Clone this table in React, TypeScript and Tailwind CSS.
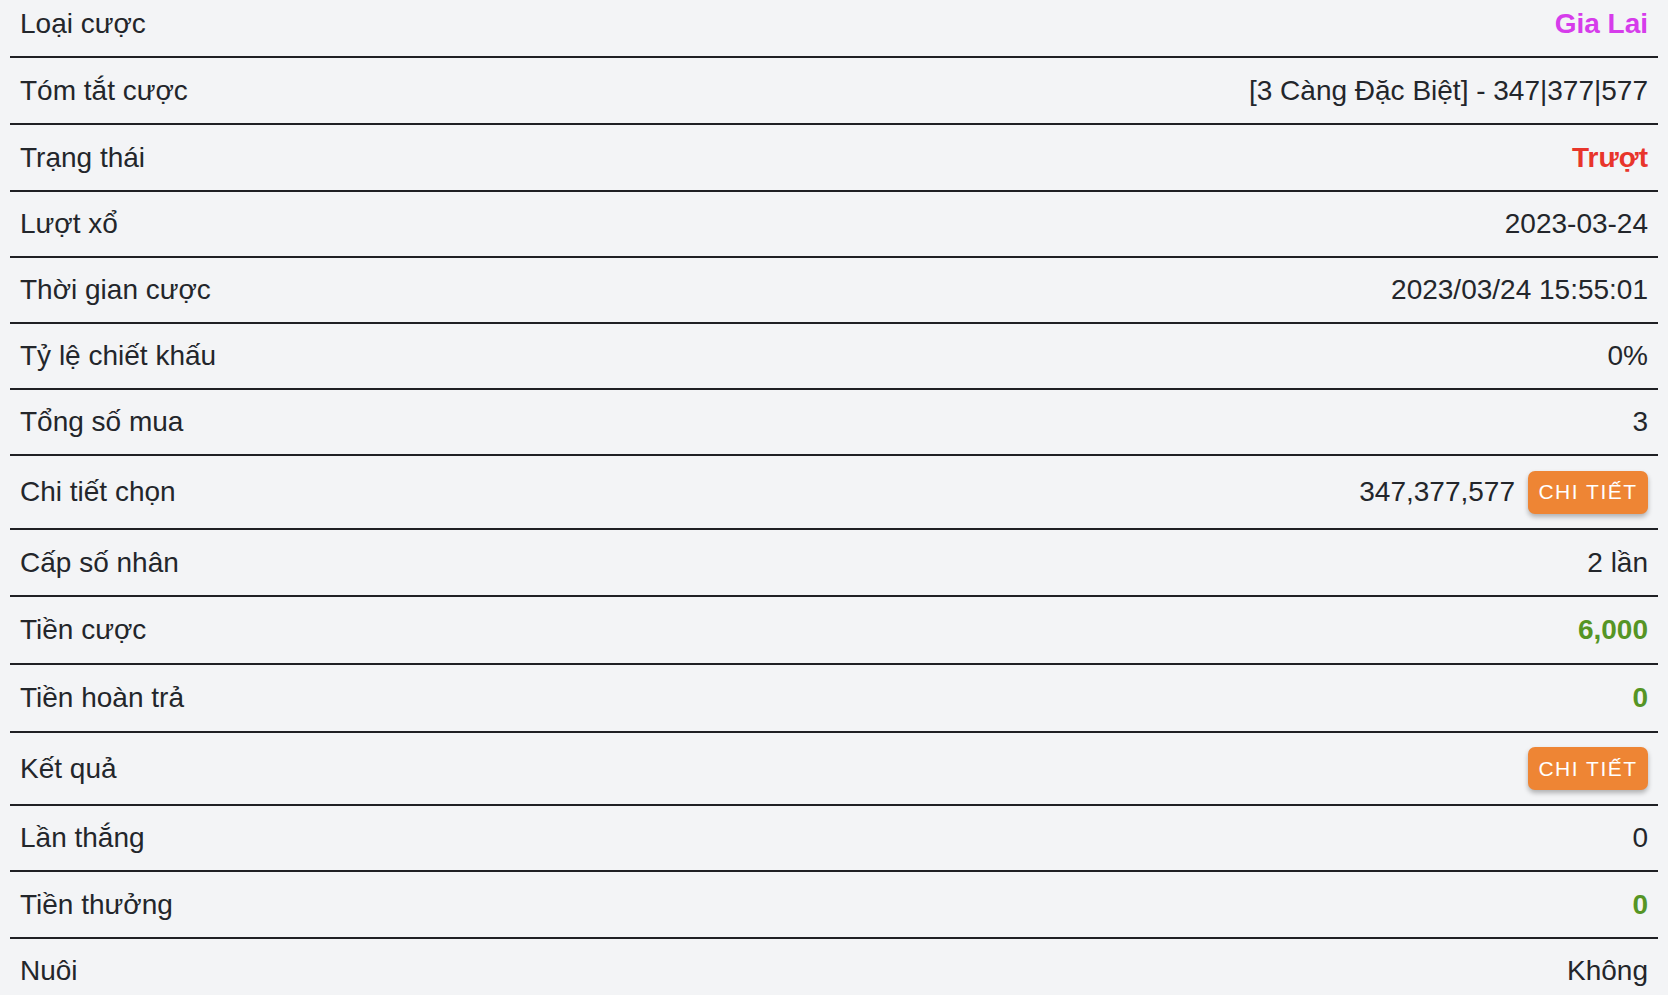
import {FC} from "react"

type Row = {
  label: string
  value?: string
  valueClass?: string
  button?: boolean
  h: string
  last?: boolean
}

// heights include the 2px bottom border (border-box)
const rows: Row[] = [
  {label: 'Loại cược', value: 'Gia Lai', valueClass: 'text-[#d63ceb] font-bold', h: 'h-[66px]'},
  {label: 'Tóm tắt cược', value: '[3 Càng Đặc Biệt] - 347|377|577', h: 'h-[67px]'},
  {label: 'Trạng thái', value: 'Trượt', valueClass: 'text-[#e8352b] font-semibold', h: 'h-[67px]'},
  {label: 'Lượt xổ', value: '2023-03-24', h: 'h-[66px]'},
  {label: 'Thời gian cược', value: '2023/03/24 15:55:01', h: 'h-[66px]'},
  {label: 'Tỷ lệ chiết khấu', value: '0%', h: 'h-[66px]'},
  {label: 'Tổng số mua', value: '3', h: 'h-[66px]'},
  {label: 'Chi tiết chọn', value: '347,377,577', button: true, h: 'h-[74px]'},
  {label: 'Cấp số nhân', value: '2 lần', h: 'h-[67px]'},
  {label: 'Tiền cược', value: '6,000', valueClass: 'text-[#559525] font-bold', h: 'h-[68px]'},
  {label: 'Tiền hoàn trả', value: '0', valueClass: 'text-[#559525] font-bold', h: 'h-[68px]'},
  {label: 'Kết quả', button: true, h: 'h-[73px]'},
  {label: 'Lần thắng', value: '0', h: 'h-[66px]'},
  {label: 'Tiền thưởng', value: '0', valueClass: 'text-[#559525] font-bold', h: 'h-[67px]'},
  {label: 'Nuôi', value: 'Không', h: 'h-[64px]', last: true},
]

const DetailButton: FC = () => (
  <button className="h-[43px] w-[120px] rounded-[7px] bg-[#ee8534] text-white text-[21px] font-medium tracking-[1.5px] shadow-[0_3px_5px_rgba(0,0,0,0.28)]">
    CHI TIẾT
  </button>
)

export default function App() {
  return (
    <div className="h-[995px] overflow-hidden bg-[#f3f4f6] text-[#23262b] font-['Liberation_Sans','Helvetica',sans-serif]">
      <div className="mx-[10px] -mt-[8px]">
        {rows.map((row) => (
          <div
            key={row.label}
            className={`flex items-center justify-between px-[10px] ${row.h} ${row.last ? '' : 'border-b-2 border-[#1f2024]'}`}
          >
            <span className="text-[28px]">{row.label}</span>
            <div className="flex items-center gap-[13px]">
              {row.value && <span className={`text-[28px] ${row.valueClass ?? ''}`}>{row.value}</span>}
              {row.button && <DetailButton/>}
            </div>
          </div>
        ))}
      </div>
    </div>
  )
}
